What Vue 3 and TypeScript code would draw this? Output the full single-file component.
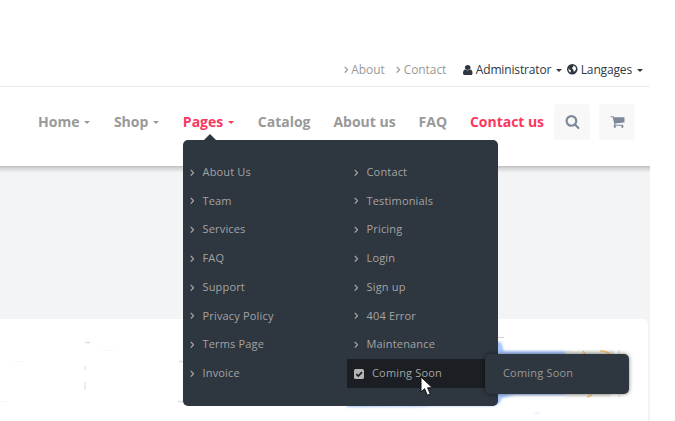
<script setup lang="ts">
interface NavItem { label: string; caret?: boolean; active?: boolean }

const nav: NavItem[] = [
  { label: 'Home', caret: true },
  { label: 'Shop', caret: true },
  { label: 'Pages', caret: true, active: true },
  { label: 'Catalog' },
  { label: 'About us' },
  { label: 'FAQ' },
  { label: 'Contact us', active: true },
]
const columns: string[][] = [
  ['About Us', 'Team', 'Services', 'FAQ', 'Support', 'Privacy Policy', 'Terms Page', 'Invoice'],
  ['Contact', 'Testimonials', 'Pricing', 'Login', 'Sign up', '404 Error', 'Maintenance', 'Coming Soon'],
]
const hovered = 'Coming Soon'
</script>

<template>
  <div class="page">
    <header class="header">
      <div class="topbar">
        <a v-for="l in ['About', 'Contact']" :key="l" class="toplink">
          <svg class="angle" viewBox="0 0 5 8"><path d="M.8 .8 4 4 .8 7.2" /></svg>{{ l }}
        </a>
        <a class="account">
          <svg class="user" viewBox="256 128 1280 1536" preserveAspectRatio="none"><path d="M1536 1399q0 109-62.5 187t-150.5 78h-854q-88 0-150.5-78t-62.5-187q0-85 8.5-160.5t31.5-152 58.5-131 94-89 134.5-34.5q131 128 313 128t313-128q76 0 134.5 34.5t94 89 58.5 131 31.5 152 8.5 160.5zm-256-887q0 159-112.5 271.5t-271.5 112.5-271.5-112.5-112.5-271.5 112.5-271.5 271.5-112.5 271.5 112.5 112.5 271.5z" /></svg>
          <span>Administrator</span><i class="caret" />
        </a>
        <a class="account language">
          <svg class="globe" viewBox="0 0 20 20"><circle cx="10" cy="10" r="10" /><path d="M12 3 16 5l1.500 4.500-3.200 5-2-.8-.2-3.200-2.300-1.600.5-2.600 2.700-1.200-1.600-1zM2.500 8 4.800 10.500l3 2.200-.8 1.800-1 2L3.500 13.500z" /></svg>
          <span>Langages</span><i class="caret" />
        </a>
      </div>
      <nav class="nav">
        <a v-for="n in nav" :key="n.label" class="navitem" :class="{ active: n.active }">
          <span>{{ n.label }}</span><i v-if="n.caret" class="caret" />
        </a>
        <button class="tool search"><svg viewBox="0 0 1792 1792"><path d="M1216 832q0-185-131.5-316.5t-316.5-131.5-316.5 131.5-131.5 316.5 131.5 316.5 316.5 131.5 316.5-131.5 131.5-316.5zm512 832q0 52-38 90t-90 38q-54 0-90-38l-343-342q-179 124-399 124-143 0-273.500-55.500t-225-150-150-225-55.500-273.500 55.500-273.500 150-225 225-150 273.500-55.500 273.500 55.500 225 150 150 225 55.500 273.500q0 220-124 399l343 343q37 37 37 90z" /></svg></button>
        <button class="tool"><svg viewBox="0 0 1792 1792"><path d="M704 1536q0 52-38 90t-90 38-90-38-38-90 38-90 90-38 90 38 38 90zm896 0q0 52-38 90t-90 38-90-38-38-90 38-90 90-38 90 38 38 90zm128-1088v512q0 24-16.5 42.5t-40.5 21.5l-1044 122q13 60 13 70 0 16-24 64h920q26 0 45 19t19 45-19 45-45 19h-1024q-26 0-45-19t-19-45q0-11 8-31.5t16-36 21.5-40 15.5-29.5l-177-823h-204q-26 0-45-19t-19-45 19-45 45-19h256q16 0 28.5 6.5t19.5 15.5 13 24.5 8 26 5.5 29.5 4.5 26h1201q26 0 45 19t19 45z" /></svg></button>
      </nav>
    </header>

    <main class="content">
      <section class="panel">
        <svg class="art" viewBox="0 319 650 102">
          <defs>
            <filter id="soft" x="-20%" y="-50%" width="140%" height="200%"><feGaussianBlur stdDeviation="1.2" /></filter>
          </defs>
          <g filter="url(#soft)">
            <path d="M494 342h7l3 9h61v9h-71zM347 400h148v6h-60l-20 1h-68zM490 388h76v7h-52l-12 3-3 6h-9z" fill="#a5c5fb" />
            <path d="M362 409q30-4 60-1v3h-60z" fill="#fff" />
            <path d="M565 351h48v6h-48zM566 392h45v4h-45z" fill="#e3e2dc" />
            <path d="M532 414l8-3-2 3z" fill="#e2ecfd" />
          </g>
          <path d="M583 351l3 4M600 351q8 0 10 4M587 397l5-2" fill="none" stroke="#f2bd6b" stroke-width="1.5" />
          <path d="M566 352h4M613 351v4M619 350v5M619 393v4" fill="none" stroke="#d5d6d6" />
          <path d="M498 337.500h6" fill="none" stroke="#d0d1d0" />
          <path d="M85 342.500h5M179 361.500h4M178 401.500h5" fill="none" stroke="#ddd" stroke-width="1.5" />
          <path d="M85 366v4M85 382v8" fill="none" stroke="#ededed" stroke-width="2" />
          <path d="M14 361.500h8M0 401.500h6M102 350.500h12M56 389v3" fill="none" stroke="#f7f6f8" />
        </svg>
      </section>
    </main>

    <div class="dropdown">
      <ul v-for="(col, i) in columns" :key="i" class="column">
        <li v-for="item in col" :key="item" class="row" :class="{ hover: item === hovered }">
          <svg v-if="item === hovered" class="check" viewBox="0 0 10 10"><rect width="10" height="10" rx="1.6" /><path d="M2.200 5 4.300 7.100 8 3.200" /></svg>
          <svg v-else class="angle" viewBox="0 0 5 8"><path d="M.8 .8 4 4 .8 7.2" /></svg>
          <span>{{ item }}</span>
        </li>
      </ul>
    </div>
    <div class="flyout">Coming Soon</div>
    <svg class="cursor" viewBox="0 0 14 22"><path d="M1 1v15l3.600-3.300 2.700 6.500 3-1.300-2.700-6.100h4.800z" /></svg>
  </div>
</template>

<style>
body { background: #fff; }
</style>

<style scoped>
.page { position: relative; width: 675px; height: 421px; overflow: hidden; background: #fff; font-family: "Open Sans", sans-serif; box-sizing: border-box; }
.header { position: relative; z-index: 1; width: 650px; height: 166px; background: #fff; }
.header::after { content: ""; position: absolute; left: 0; top: 166px; width: 650px; height: 7px; background: linear-gradient(#bfbfc0, #dcddde 45%, #f3f4f6); }
.topbar { box-sizing: border-box; height: 87px; padding: 53px 7px 0 0; display: flex; align-items: center; justify-content: flex-end; border-bottom: 1px solid #eaeaea; font-size: 12px; line-height: 17px; color: #999; }
.toplink { display: flex; align-items: center; gap: 3px; margin-right: 11.500px; letter-spacing: -.08px; }
.angle { width: 4.500px; height: 7.500px; flex: none; }
.angle path { fill: none; stroke: currentColor; stroke-width: 1.4; }
.account { display: flex; align-items: center; color: #2e363f; margin-left: 5.500px; letter-spacing: -.15px; }
.account svg { fill: currentColor; margin-right: 3px; }
.user { width: 9.500px; height: 10px; }
.globe { width: 10.500px; height: 10.500px; }
.account.language { margin-left: 5px; }
.globe path { fill: #fff; }
.caret { display: block; width: 0; height: 0; border: 3px solid transparent; border-top-color: currentColor; border-bottom: 0; margin: 2px 0 0 5px; }
.nav { display: flex; align-items: center; height: 70px; padding-left: 38px; font-size: 14px; font-weight: 700; color: #999; }
.navitem { display: flex; align-items: center; margin-right: 23.500px; padding-bottom: 2px; white-space: nowrap; }
.navitem.active { color: #f8385f; }
.navitem:nth-child(n+4) { margin-right: 22.900px; }
.navitem:nth-child(7) { margin-right: 10.400px; letter-spacing: -.03px; }
.tool { display: flex; align-items: center; justify-content: center; flex: none; width: 36px; height: 36px; padding: 0 0 1px; border: 0; border-radius: 3px; background: #f8f8f8; margin-right: 9px; }
.tool svg { width: 15px; height: 15px; fill: #7c8999; }
.content { width: 650px; height: 255px; background: #f3f4f6; padding-top: 153px; box-sizing: border-box; }
.panel { width: 648px; height: 102px; background: #fff; border-radius: 0 5px 0 0; }
.art { display: block; width: 650px; height: 102px; }
.dropdown { position: absolute; z-index: 2; left: 183px; top: 140px; box-sizing: border-box; width: 315px; height: 266px; padding-top: 17.900px; display: flex; gap: 13px; background: #2e363f; border-radius: 5px; color: #a4a4a4; font-size: 11px; letter-spacing: .17px; }
.dropdown::before { content: ""; position: absolute; left: 21px; top: -6px; border: 6px solid transparent; border-top: 0; border-bottom-color: #2e363f; }
.column { width: 151px; margin: 0; padding: 0; list-style: none; }
.row { display: flex; align-items: center; height: 28.780px; padding-left: 6.500px; gap: 8.500px; box-sizing: border-box; white-space: nowrap; }
.row span { padding-bottom: 2px; }
.row.hover { background: #1b1e22; }
.check { width: 10px; height: 10px; }
.check rect { fill: #b5b5b5; }
.check path { fill: none; stroke: #1b1e22; stroke-width: 1.700; }
.flyout { position: absolute; z-index: 3; left: 485px; top: 354px; box-sizing: border-box; width: 144px; height: 40px; padding-left: 18px; line-height: 38px; background: #2e363f; border-radius: 5px; color: #999; font-size: 11px; letter-spacing: .19px; box-shadow: 0 0 4px rgba(0, 0, 0, .5); }
.cursor { position: absolute; z-index: 4; left: 420px; top: 376px; width: 14px; height: 22px; fill: #fff; stroke: #111; }
</style>
